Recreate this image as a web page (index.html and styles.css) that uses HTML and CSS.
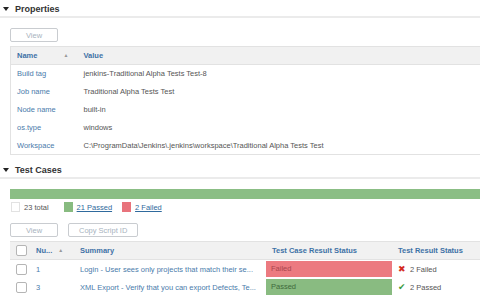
FILE: index.html
```html
<!DOCTYPE html>
<html lang="en">

<head>
    <meta charset="UTF-8">
    <meta name="viewport" content="width=device-width, initial-scale=1.0">
    <title>Test Run</title>
    <link rel="stylesheet" href="styles.css">
</head>

<body>
    <section class="panel">
        <h2 class="panel-title"><span class="caret"></span>Properties</h2>
        <div class="panel-body">
            <div class="toolbar">
                <button class="btn" disabled>View</button>
            </div>
            <table class="grid props">
                <thead>
                    <tr>
                        <th class="col-name">Name <span class="sort">&#9650;</span></th>
                        <th>Value</th>
                    </tr>
                </thead>
                <tbody>
                    <tr><td class="key">Build tag</td><td>jenkins-Traditional Alpha Tests Test-8</td></tr>
                    <tr><td class="key">Job name</td><td>Traditional Alpha Tests Test</td></tr>
                    <tr><td class="key">Node name</td><td>built-in</td></tr>
                    <tr><td class="key">os.type</td><td>windows</td></tr>
                    <tr><td class="key">Workspace</td><td>C:\ProgramData\Jenkins\.jenkins\workspace\Traditional Alpha Tests Test</td></tr>
                </tbody>
            </table>
        </div>
    </section>

    <section class="panel">
        <h2 class="panel-title"><span class="caret"></span>Test Cases</h2>
        <div class="panel-body">
            <div class="progress">
                <div class="progress-pass" style="width: 91.3%"></div>
                <div class="progress-fail" style="width: 8.7%"></div>
            </div>
            <div class="legend">
                <span class="swatch"></span><span class="total">23 total</span>
                <span class="swatch pass"></span><a href="#">21 Passed</a>
                <span class="swatch fail"></span><a href="#">2 Failed</a>
            </div>
            <div class="toolbar">
                <button class="btn" disabled>View</button>
                <button class="btn" disabled>Copy Script ID</button>
            </div>
            <table class="grid cases">
                <thead>
                    <tr>
                        <th class="col-check"><span class="check"></span></th>
                        <th class="col-num">Nu... <span class="sort">&#9650;</span></th>
                        <th class="col-summary">Summary</th>
                        <th class="col-status">Test Case Result Status</th>
                        <th>Test Result Status</th>
                    </tr>
                </thead>
                <tbody>
                    <tr>
                        <td class="col-check"><span class="check"></span></td>
                        <td class="key">1</td>
                        <td class="key">Login - User sees only projects that match their se...</td>
                        <td class="status"><div class="cell-fill failed">Failed</div></td>
                        <td><span class="mark cross">&#10006;</span>2 Failed</td>
                    </tr>
                    <tr>
                        <td class="col-check"><span class="check"></span></td>
                        <td class="key">3</td>
                        <td class="key">XML Export - Verify that you can export Defects, Te...</td>
                        <td class="status"><div class="cell-fill passed">Passed</div></td>
                        <td><span class="mark tick">&#10004;</span>2 Passed</td>
                    </tr>
                </tbody>
            </table>
        </div>
    </section>
</body>

</html>
```

FILE: styles.css
```css
body {
    margin: 0;
    font-family: "Liberation Sans", Arial, sans-serif;
    font-size: 7.5px;
    color: #555;
    background: #fff;
    overflow: hidden;
    width: 480px;
    height: 295px;
}

.panel {
    width: 540px;
}

.panel + .panel {
    margin-top: 6px;
}

.panel-title {
    display: flex;
    align-items: center;
    margin: 0;
    height: 15px;
    padding-top: 1px;
    font-size: 9px;
    font-weight: bold;
    color: #333;
    border-bottom: 2px solid #ebebeb;
}

.caret {
    width: 0;
    height: 0;
    margin: 0 6px 0 3px;
    border-left: 3.5px solid transparent;
    border-right: 3.5px solid transparent;
    border-top: 4.5px solid #222;
}

.panel-body {
    padding-left: 10px;
}

.toolbar {
    display: flex;
    gap: 10px;
    padding-top: 10px;
}

.btn {
    height: 14px;
    min-width: 48px;
    padding: 0 10px;
    background: #fff;
    border: 1px solid #c9ccd0;
    border-radius: 2px;
    font-family: inherit;
    font-size: 7.5px;
    color: #a7b3be;
}

.grid {
    width: 100%;
    table-layout: fixed;
    border-collapse: collapse;
    margin-top: 4px;
}

.grid th,
.grid td {
    box-sizing: border-box;
    padding: 0 6px;
    white-space: nowrap;
    overflow: hidden;
    text-align: left;
}

.grid th {
    height: 18px;
    font-weight: bold;
    color: #3e72a6;
    background: #f1f1f1;
    border-top: 1px solid #e2e2e2;
    border-bottom: 1px solid #e2e2e2;
}

.grid td {
    height: 18px;
}

.sort {
    font-size: 5px;
    font-weight: normal;
    color: #999;
    vertical-align: 1px;
}

.key {
    color: #4a7bab;
}

.props {
    border-left: 1px solid #e2e2e2;
    border-bottom: 1px solid #e2e2e2;
}

.props .col-name {
    width: 67px;
}

.props .sort {
    margin-left: 24px;
}

.progress {
    display: flex;
    height: 10px;
    margin-top: 10px;
}

.progress-pass {
    background: #8bbe85;
}

.progress-fail {
    background: #8bbe85;
}

.legend {
    display: flex;
    align-items: center;
    height: 12px;
    margin-top: 2px;
    padding-left: 1px;
}

.legend a {
    color: #2f6a9d;
    margin-right: 10px;
}

.legend .total {
    margin-right: 15px;
}

.swatch {
    width: 7px;
    height: 8px;
    margin-right: 4px;
    border: 1px solid #e2e2e2;
    background: #fff;
}

.swatch.pass {
    background: #88bb80;
    border-color: #88bb80;
}

.swatch.fail {
    background: #e8737c;
    border-color: #e8737c;
}

.cases {
    margin-top: 4px;
}

.cases .col-check {
    width: 20px;
    padding-right: 0;
}

.cases .col-num {
    width: 44px;
}

.cases .col-num .sort {
    margin-left: 4px;
}

.cases .col-summary {
    width: 192px;
}

.cases .col-status {
    width: 126px;
}

.cases td.status {
    padding: 1px 0;
}

.check {
    display: block;
    width: 9px;
    height: 9px;
    border: 1px solid #b5b5b5;
    border-radius: 2px;
    background: #fff;
}

.cell-fill {
    height: 16px;
    line-height: 16px;
    padding: 0 5px;
}

.cell-fill.failed {
    background: #ec7a80;
    color: #a9464e;
}

.cell-fill.passed {
    background: #89bb81;
    color: #3f6a3b;
}

.mark {
    display: inline-block;
    width: 10px;
    margin-right: 2px;
    font-size: 9px;
    font-family: "DejaVu Sans", sans-serif;
}

.mark.cross {
    color: #d42a1e;
}

.mark.tick {
    color: #3c9a3a;
}
```
